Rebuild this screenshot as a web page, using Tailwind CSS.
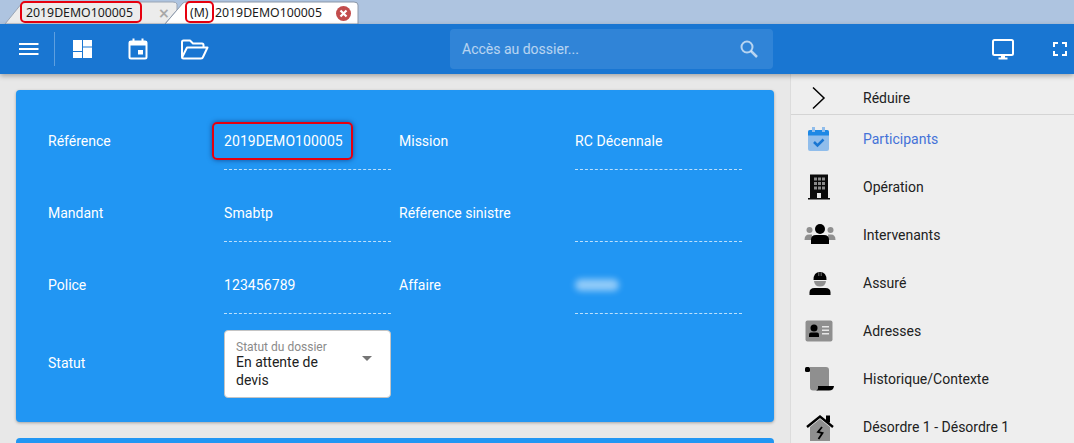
<!DOCTYPE html>
<html lang="fr">
<head>
<meta charset="utf-8">
<title>Dossier</title>
<script src="https://cdn.jsdelivr.net/npm/@tailwindcss/browser@4"></script>
</head>
<body class="w-[1074px] h-[443px] overflow-hidden bg-[#e8e8e8] font-['Roboto',sans-serif] text-sm">
<!-- Tab strip -->
<div class="relative h-6 bg-[#aec4e0] flex items-end overflow-hidden">
  <svg class="absolute left-0 top-0" width="360" height="24" viewBox="0 0 360 24">
    <path d="M5 24 L22 3 Q23 2 26 2 H173 Q176 2 177 4 L177 10 L165 24 Z" fill="#ececec" stroke="#9aa5b5"/>
    <path d="M165 24 L183 3 Q184 2 187 2 H354 Q358 2 358 5 V24 Z" fill="#ffffff" stroke="#8b97a8"/>
  </svg>
  <div class="relative flex items-center h-[22px] w-full">
    <span class="ml-[26px] w-[107px] text-[12.3px] font-['Noto_Sans',sans-serif] text-[#1a1a1a] whitespace-nowrap">2019DEMO100005</span>
    <span class="ml-[25px] w-[10px] text-[#a8a8a8] text-sm font-bold leading-none font-['DejaVu_Sans',sans-serif]">×</span>
    <span class="ml-[22px] w-[25px] text-[12.3px] font-['Noto_Sans',sans-serif] text-[#1a1a1a]">(M)</span>
    <span class="w-[107px] text-[12.3px] font-['Noto_Sans',sans-serif] text-[#1a1a1a] whitespace-nowrap">2019DEMO100005</span>
    <span class="ml-[14px] w-[15px] h-[15px] rounded-full bg-[#c24c4c] flex items-center justify-center">
      <svg width="9" height="9" viewBox="0 0 9 9"><path d="M1.500 1.500 L7.500 7.500 M7.500 1.500 L1.500 7.500" stroke="#fff" stroke-width="2.200"/></svg>
    </span>
  </div>
  <div class="absolute left-[20px] top-[1px] w-[122px] h-[22px] rounded-[5px] border-2 border-[#e6000f]"></div>
  <div class="absolute left-[185px] top-[1px] w-[29px] h-[22px] rounded-[5px] border-2 border-[#e6000f]"></div>
</div>

<!-- Top bar -->
<header class="relative z-10 h-[50px] bg-[#1976d2] shadow-[0_2px_5px_rgba(0,0,0,0.3)] flex items-center text-white">
  <svg class="ml-[19px]" width="20" height="14" viewBox="0 0 20 14" fill="#fff"><rect y="1" width="19.500" height="2"/><rect y="6" width="19.500" height="2"/><rect y="11" width="19.500" height="2"/></svg>
  <div class="ml-[15px] w-px h-[34px] bg-white/30"></div>
  <svg class="ml-[18px]" width="19" height="18" viewBox="0 0 19 18" fill="#fff"><rect x="0" y="0" width="9" height="11"/><rect x="10" y="0" width="9" height="6.500"/><rect x="0" y="12" width="9" height="6"/><rect x="10" y="7.500" width="9" height="10.500"/></svg>
  <svg class="ml-[36px]" width="20" height="22" viewBox="0 0 20 22" fill="none"><path d="M1.500 5 Q1.500 3.500 3 3.500 H17 Q18.500 3.500 18.500 5 V19 Q18.500 20.500 17 20.500 H3 Q1.500 20.500 1.500 19 Z" stroke="#fff" stroke-width="2"/><rect x="1" y="3" width="18" height="4.500" fill="#fff"/><rect x="4.500" y="0.500" width="2" height="4" fill="#fff"/><rect x="13.500" y="0.500" width="2" height="4" fill="#fff"/><rect x="10" y="12" width="5" height="4.500" fill="#fff"/></svg>
  <svg class="ml-[32px]" width="29" height="21" viewBox="0 0 29 21" fill="none" stroke="#fff" stroke-width="2" stroke-linejoin="round"><path d="M2 18 V3 Q2 1.500 3.500 1.500 H10 L13 4.500 H22 Q23.500 4.500 23.500 6 V8"/><path d="M2 18.500 L7 8.500 H27.500 L23 18 Q22.700 19.500 21 19.500 H3.500 Q2 19.500 2 18"/></svg>
  <div class="ml-[241px] w-[323px] h-10 rounded bg-white/10 flex items-center pl-3 pr-[14px]">
    <span class="flex-1 text-white/65">Accès au dossier...</span>
    <svg width="20" height="20" viewBox="0 0 20 20" fill="none" stroke="#fff" stroke-opacity="0.65"><circle cx="8" cy="8" r="5.500" stroke-width="2"/><path d="M12 12 L18 18" stroke-width="2.500"/></svg>
  </div>
  <svg class="ml-[218px]" width="24" height="24" viewBox="0 0 24 24" fill="none"><rect x="2" y="3" width="20" height="15" rx="1.500" stroke="#fff" stroke-width="2"/><rect x="10" y="18" width="4" height="3" fill="#fff"/><rect x="7.500" y="20.500" width="9" height="2" fill="#fff"/></svg>
  <svg class="ml-[38px]" width="14" height="14" viewBox="0 0 14 14" fill="none" stroke="#fff" stroke-width="2"><path d="M1 5 V1 H5 M9 1 H13 V5 M13 9 V13 H9 M5 13 H1 V9"/></svg>
</header>

<div class="flex h-[369px]">
  <!-- Main -->
  <main class="w-[790px] pl-4 pr-4 pt-4 overflow-hidden">
    <section class="w-[758px] h-[332px] rounded bg-[#2196f3] shadow-[0_1px_3px_rgba(0,0,0,0.3)] pl-8 pt-[23px] text-white grid grid-cols-[176px_175px_176px_167px] grid-rows-[57px_57px_57px_68px] gap-y-[15px] content-start">
      <div class="flex items-center pb-px">Référence</div>
      <div class="relative w-[167px] flex items-center pb-px border-b border-dashed border-white/70 tracking-[0.08px]">2019DEMO100005
        <span class="absolute left-[-12px] top-[9px] w-[141px] h-[38px] rounded-[5px] border-2 border-[#e6000f] shadow-[0_0_5px_rgba(0,0,60,0.5)]"></span>
      </div>
      <div class="flex items-center pb-px">Mission</div>
      <div class="flex items-center pb-px border-b border-dashed border-white/70 tracking-[0.08px]">RC Décennale</div>

      <div class="flex items-center pb-px">Mandant</div>
      <div class="w-[167px] flex items-center pb-px border-b border-dashed border-white/70 tracking-[0.08px]">Smabtp</div>
      <div class="flex items-center pb-px">Référence sinistre</div>
      <div class="flex items-center pb-px border-b border-dashed border-white/70"></div>

      <div class="flex items-center pb-px">Police</div>
      <div class="w-[167px] flex items-center pb-px border-b border-dashed border-white/70 tracking-[0.08px]">123456789</div>
      <div class="flex items-center pb-px">Affaire</div>
      <div class="flex items-center pb-px border-b border-dashed border-white/70"><span class="w-[44px] h-[12px] rounded-full bg-white/50 blur-[3px]"></span></div>

      <div class="flex items-center">Statut</div>
      <div class="relative mt-px h-[68px] w-[167px] rounded bg-white border border-[#c4c4c4] pl-[11px] pt-[10px] text-[#212121]">
        <div class="text-xs leading-[12px] text-[#8a8a8a]">Statut du dossier</div>
        <div class="w-[100px] leading-[18px]">En attente de devis</div>
        <svg class="absolute right-[18px] top-[25px]" width="10" height="5" viewBox="0 0 10 5" fill="#757575"><path d="M0 0 H10 L5 5 Z"/></svg>
      </div>
    </section>
    <div class="mt-4 w-[758px] h-10 rounded bg-[#2196f3]"></div>
  </main>

  <!-- Sidebar -->
  <aside class="w-[284px] bg-[#eeeeee] border-l border-[#dcdcdc] text-[#212121]">
    <div class="h-[41px] flex items-center border-b border-[#d4d4d4] pt-[8px]">
      <span class="w-[72px] flex pl-[21px]"><svg width="14" height="24" viewBox="0 0 14 24" fill="none" stroke="#000" stroke-width="1.500"><path d="M1 1.500 L12 12 L1 22.500"/></svg></span>
      <span>Réduire</span>
    </div>
    <ul>
      <li class="h-12 flex items-center">
        <span class="w-[72px] pl-[16px]"><svg width="24" height="26" viewBox="0 0 24 26"><rect x="1" y="4" width="21" height="21" rx="2" fill="#90bdeb"/><path d="M1 6 Q1 4 3 4 H20 Q22 4 22 6 V9.500 H1 Z" fill="#1e88e5"/><rect x="5" y="1" width="3" height="5" fill="#90bdeb"/><rect x="15" y="1" width="3" height="5" fill="#90bdeb"/><path d="M7 16 L10.500 19.500 L16.500 13.500" fill="none" stroke="#1976d2" stroke-width="2.500"/></svg></span>
        <span class="text-[#4472d8]">Participants</span>
      </li>
      <li class="h-12 flex items-center">
        <span class="w-[72px] pl-[16px]"><svg width="24" height="26" viewBox="0 0 24 26"><path d="M3 0.500 H21 V24 H23 V25.500 H1 V24 H3 Z" fill="#0a0a0a"/><g fill="#8a8a8a"><rect x="7" y="3.500" width="3" height="3"/><rect x="11" y="3.500" width="3" height="3"/><rect x="15" y="3.500" width="3" height="3"/><rect x="7" y="8" width="3" height="3"/><rect x="11" y="8" width="3" height="3"/><rect x="15" y="8" width="3" height="3"/><rect x="7" y="12.500" width="3" height="3"/><rect x="11" y="12.500" width="3" height="3"/><rect x="15" y="12.500" width="3" height="3"/></g><rect x="10" y="19" width="4" height="5" fill="#e8e8e8"/></svg></span>
        <span>Opération</span>
      </li>
      <li class="h-12 flex items-center">
        <span class="w-[72px] pl-[13px]"><svg width="32" height="24" viewBox="0 0 32 24"><g fill="#8f8f8f"><circle cx="5.500" cy="7" r="3"/><circle cx="26.500" cy="7" r="3"/><path d="M0.500 17 Q0.500 11.500 5 11.500 H8 L8 17 Z"/><path d="M31.500 17 Q31.500 11.500 27 11.500 H24 L24 17 Z"/></g><circle cx="16" cy="6" r="5"/><path d="M7 21 V17 Q7 12 12 12 H20 Q25 12 25 17 V21 Z"/></svg></span>
        <span>Intervenants</span>
      </li>
      <li class="h-12 flex items-center">
        <span class="w-[72px] pl-[17px]"><svg width="24" height="26" viewBox="0 0 24 26"><path d="M5.500 10 Q5.500 2 12 2 Q18.500 2 18.500 10 Z"/><path d="M10.800 2.500 V6 M13.200 2.500 V6" stroke="#8f8f8f" stroke-width="0.800"/><path d="M6 11 H18 Q17.500 16.500 12 16.500 Q6.500 16.500 6 11 Z" fill="#8f8f8f"/><path d="M1.500 25 V22.500 Q1.500 18 6.500 18 H17.500 Q22.500 18 22.500 22.500 V25 Z"/></svg></span>
        <span>Assuré</span>
      </li>
      <li class="h-12 flex items-center">
        <span class="w-[72px] pl-[14px]"><svg width="28" height="22" viewBox="0 0 28 22"><rect x="0.500" y="0.500" width="27" height="21" rx="2" fill="#8f8f8f"/><circle cx="9" cy="8" r="3.500"/><path d="M4 17 V14.500 Q4 12.500 6 12.500 H12 Q14 12.500 14 14.500 V17 Z"/><g fill="#e6e6e6"><rect x="17" y="6" width="7" height="1.500"/><rect x="17" y="9.500" width="7" height="1.500"/><rect x="17" y="13" width="7" height="1.500"/></g></svg></span>
        <span>Adresses</span>
      </li>
      <li class="h-12 flex items-center">
        <span class="w-[72px] pl-[13px]"><svg width="30" height="26" viewBox="0 0 30 26"><path d="M6 1 H22 Q25 1 25 4 V20 H14 V24.500 H9 Q6 24.500 6 21.500 Z" fill="#8f8f8f"/><rect x="1" y="1" width="5" height="5" rx="1.500"/><path d="M14 20 H30 Q29.500 24.500 25 24.500 H12 Q14.500 24 14 20 Z"/></svg></span>
        <span>Historique/Contexte</span>
      </li>
      <li class="h-12 flex items-center overflow-hidden">
        <span class="w-[72px] pl-[15px]"><svg width="28" height="27" viewBox="0 0 28 27"><path d="M4 13 L14 5 L24 13 V27 H4 Z" fill="#8f8f8f"/><path d="M1 13 L14 2.500 L27 13" fill="none" stroke="#000" stroke-width="2.400"/><rect x="20" y="1.500" width="4" height="7"/><path d="M16 13 L12 18 L16.500 19 L12.500 25" fill="none" stroke="#000" stroke-width="1.800"/></svg></span>
        <span>Désordre 1 - Désordre 1</span>
      </li>
    </ul>
  </aside>
</div>
</body>
</html>
